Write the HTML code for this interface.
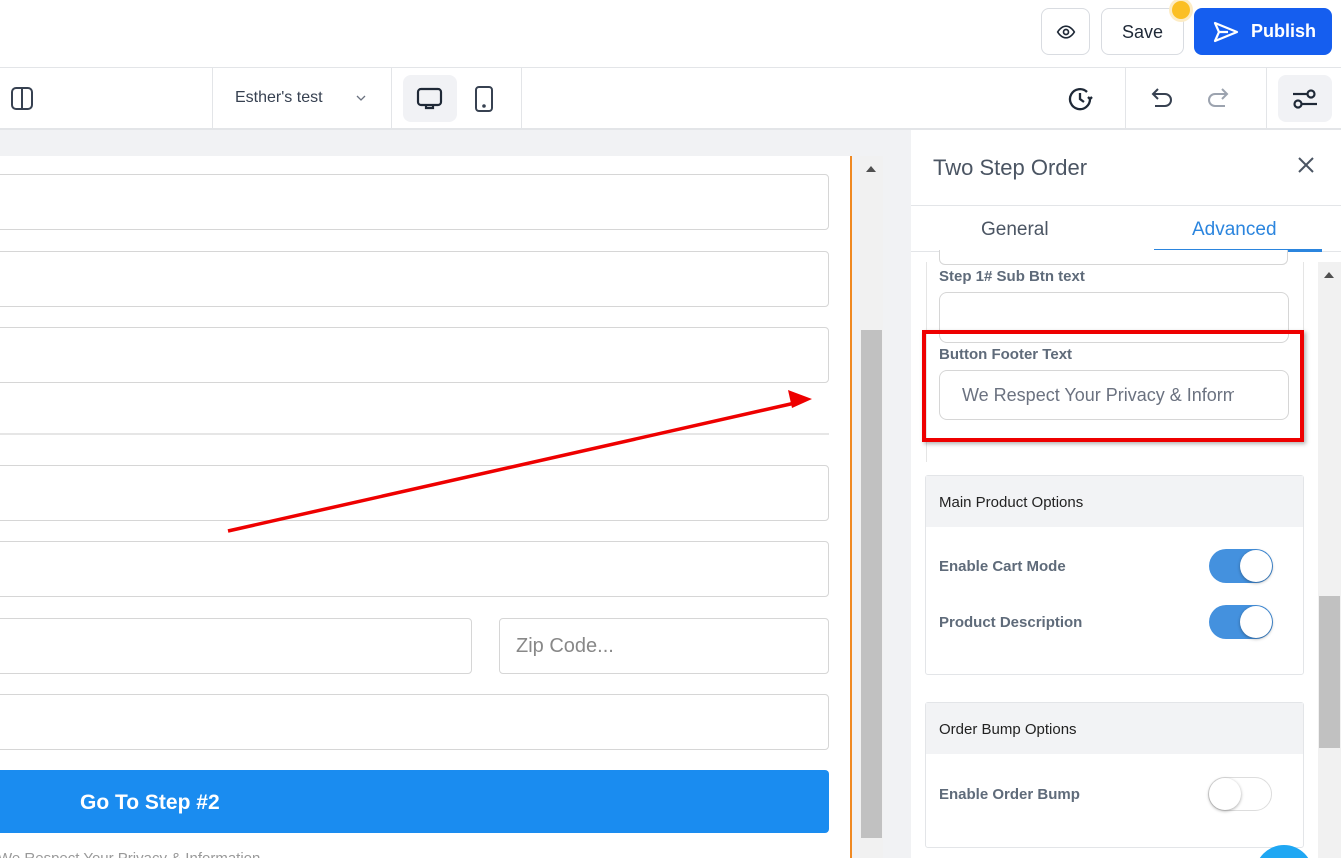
<!DOCTYPE html>
<html style="width:1341px;height:858px;overflow:hidden"><head><style>
*{box-sizing:border-box;margin:0;padding:0}
body{width:1341px;height:858px;overflow:hidden;background:#f1f2f4;font-family:"Liberation Sans",sans-serif;position:relative}
.a{position:absolute}
.inp{position:absolute;background:#fff;border:1px solid #d6d6d6;border-radius:4px}
.lbl{font-size:15px;color:#5f6b7a;font-weight:bold}
.tg{position:absolute;width:64px;height:34px;border-radius:17px}
.tg i{position:absolute;top:1px;width:32px;height:32px;border-radius:50%;background:#fff;box-shadow:0 1px 3px rgba(0,0,0,.35)}
</style></head><body>
<div class="a" style="left:0;top:0;width:1341px;height:68px;background:#fff;border-bottom:1px solid #e3e5e8"></div>
<div class="a" style="left:1041px;top:8px;width:49px;height:47px;border:1px solid #d9dce1;border-radius:8px;background:#fff"></div>
<svg class="a" style="left:1055px;top:22px" width="22" height="20" viewBox="0 0 24 24" fill="none" stroke="#1f2937" stroke-width="2"><path d="M2 12s4-7 10-7 10 7 10 7-4 7-10 7S2 12 2 12z"/><circle cx="12" cy="12" r="3"/></svg>
<div class="a" style="left:1101px;top:8px;width:83px;height:47px;border:1px solid #d9dce1;border-radius:8px;background:#fff;font-size:18px;color:#1f2937;text-align:center;line-height:47px">Save</div>
<div class="a" style="left:1172px;top:1px;width:18px;height:18px;border-radius:50%;background:#fbbf24;box-shadow:0 0 0 3px #fdecc4"></div>
<div class="a" style="left:1194px;top:8px;width:138px;height:47px;border-radius:8px;background:#155eef;color:#fff;font-size:18px;font-weight:bold;line-height:46px;padding-left:57px">Publish</div>
<svg class="a" style="left:1212px;top:20px" width="28" height="24" viewBox="0 0 28 24" fill="none" stroke="#fff" stroke-width="2.2" stroke-linejoin="round"><path d="M3 3l22 9-22 9 4-9z M7 12h9"/></svg>
<div class="a" style="left:0;top:68px;width:1341px;height:62px;background:#fff;border-bottom:2px solid #e3e5e8"></div>
<svg class="a" style="left:10px;top:86px" width="25" height="25" viewBox="0 0 25 25" fill="none" stroke="#374151" stroke-width="2"><rect x="2" y="2" width="20" height="21" rx="4"/><path d="M12 2v21"/></svg>
<div class="a" style="left:212px;top:68px;width:1px;height:61px;background:#e3e5e8"></div>
<div class="a" style="left:235px;top:89px;font-size:16px;color:#374151">Esther's test</div>
<svg class="a" style="left:355px;top:93px" width="12" height="10" viewBox="0 0 12 10" fill="none" stroke="#6b7280" stroke-width="1.3"><path d="M2 3l4 4 4-4"/></svg>
<div class="a" style="left:391px;top:68px;width:1px;height:61px;background:#e3e5e8"></div>
<div class="a" style="left:403px;top:75px;width:54px;height:47px;border-radius:8px;background:#f1f2f5"></div>
<svg class="a" style="left:416px;top:86px" width="28" height="26" viewBox="0 0 28 26" fill="none" stroke="#1f2937" stroke-width="2.2"><rect x="2" y="3" width="23" height="16" rx="3"/><path d="M10 19v3h7v-3"/></svg>
<svg class="a" style="left:473px;top:85px" width="22" height="28" viewBox="0 0 22 28" fill="none" stroke="#374151" stroke-width="2"><rect x="3" y="2" width="16" height="24" rx="3"/><circle cx="11" cy="21" r="0.8" fill="#374151"/></svg>
<div class="a" style="left:521px;top:68px;width:1px;height:61px;background:#e3e5e8"></div>
<svg class="a" style="left:1068px;top:86px" width="28" height="26" viewBox="0 0 28 26" fill="none" stroke="#1f2937" stroke-width="2.3"><path d="M22 13a10 10 0 1 1-3-7"/><path d="M12 7v6l4 3"/><path d="M22 13l2-2M22 13l-2-2"/></svg>
<div class="a" style="left:1125px;top:68px;width:1px;height:61px;background:#e3e5e8"></div>
<svg class="a" style="left:1150px;top:86px" width="26" height="24" viewBox="0 0 26 24" fill="none" stroke="#374151" stroke-width="2"><path d="M8 3L3 8l5 5M3 8h12a6 6 0 0 1 0 12H5"/></svg>
<svg class="a" style="left:1204px;top:86px" width="26" height="24" viewBox="0 0 26 24" fill="none" stroke="#9ca3af" stroke-width="2"><path d="M18 3l5 5-5 5M23 8H11a6 6 0 0 0 0 12h10"/></svg>
<div class="a" style="left:1266px;top:68px;width:1px;height:61px;background:#e3e5e8"></div>
<div class="a" style="left:1278px;top:75px;width:54px;height:47px;border-radius:8px;background:#f1f2f5"></div>
<svg class="a" style="left:1290px;top:86px" width="30" height="26" viewBox="0 0 30 26" fill="none" stroke="#1f2937" stroke-width="2.2"><circle cx="21" cy="8" r="3.5"/><path d="M3 8h14"/><circle cx="8" cy="18" r="3.5"/><path d="M12 18h15"/></svg>
<div class="a" style="left:0;top:156px;width:851px;height:702px;background:#fff"></div>
<div class="a" style="left:850px;top:156px;width:2px;height:702px;background:#f08a24"></div>
<div class="a" style="left:860px;top:156px;width:23px;height:702px;background:#f1f1f1"></div>
<div class="a" style="left:861px;top:330px;width:21px;height:508px;background:#c1c1c1"></div>
<div class="a" style="left:866px;top:166px;width:0;height:0;border-left:5px solid transparent;border-right:5px solid transparent;border-bottom:6px solid #505050"></div>
<div class="inp" style="left:-10px;top:174px;width:839px;height:56px"></div>
<div class="inp" style="left:-10px;top:251px;width:839px;height:56px"></div>
<div class="inp" style="left:-10px;top:327px;width:839px;height:56px"></div>
<div class="a" style="left:0;top:433px;width:829px;height:2px;background:#e6e6e6"></div>
<div class="inp" style="left:-10px;top:465px;width:839px;height:56px"></div>
<div class="inp" style="left:-10px;top:541px;width:839px;height:56px"></div>
<div class="inp" style="left:-10px;top:618px;width:482px;height:56px"></div>
<div class="inp" style="left:499px;top:618px;width:330px;height:56px;font-size:20px;color:#888;padding:16px 0 0 16px">Zip Code...</div>
<div class="inp" style="left:-10px;top:694px;width:839px;height:56px"></div>
<div class="a" style="left:-10px;top:770px;width:839px;height:63px;background:#1a8cf0;border-radius:4px;color:#fff;font-size:21px;font-weight:bold;padding:21px 0 0 90px">Go To Step #2</div>
<div class="a" style="left:-2px;top:850px;font-size:15px;color:#999">We Respect Your Privacy &amp; Information</div>
<svg class="a" style="left:0;top:0" width="900" height="600"><line x1="228" y1="531" x2="795" y2="403" stroke="#e00" stroke-width="3.5"/><path d="M812 399l-24-9 4 18z" fill="#e00"/></svg>
<div class="a" style="left:911px;top:130px;width:430px;height:728px;background:#fff"></div>
<div class="a" style="left:933px;top:155px;font-size:22px;color:#4b5563">Two Step Order</div>
<svg class="a" style="left:1296px;top:155px" width="20" height="20" viewBox="0 0 20 20" stroke="#4b5563" stroke-width="2"><path d="M3 3l14 14M17 3L3 17"/></svg>
<div class="a" style="left:911px;top:205px;width:430px;height:1px;background:#e3e5e8"></div>
<div class="a" style="left:981px;top:219px;font-size:19px;color:#4b5563">General</div>
<div class="a" style="left:1192px;top:219px;font-size:19px;color:#2b85de">Advanced</div>
<div class="a" style="left:911px;top:251px;width:430px;height:1px;background:#e3e5e8"></div>
<div class="a" style="left:1154px;top:249px;width:168px;height:3px;background:#2b85de"></div>
<div class="a" style="left:1318px;top:262px;width:23px;height:596px;background:#f1f1f1"></div>
<div class="a" style="left:1319px;top:596px;width:21px;height:152px;background:#c1c1c1"></div>
<div class="a" style="left:1324px;top:272px;width:0;height:0;border-left:5px solid transparent;border-right:5px solid transparent;border-bottom:6px solid #505050"></div>
<div class="a" style="left:926px;top:262px;width:1px;height:200px;background:#e5e5e5"></div>
<div class="a" style="left:1303px;top:262px;width:1px;height:70px;background:#e5e5e5"></div>
<div class="inp" style="left:939px;top:250px;width:349px;height:15px;border-top:none;border-radius:0 0 6px 6px"></div>
<div class="a lbl" style="left:939px;top:268px">Step 1# Sub Btn text</div>
<div class="inp" style="left:939px;top:292px;width:350px;height:51px;border-radius:8px"></div>
<div class="a lbl" style="left:939px;top:346px">Button Footer Text</div>
<div class="inp" style="left:939px;top:370px;width:350px;height:50px;border-radius:8px;font-size:18px;color:#6b7280;padding:14px 0 0 22px;white-space:nowrap;overflow:hidden"><span style="display:inline-block;width:272px;overflow:hidden">We Respect Your Privacy &amp; Information</span></div>
<div class="a" style="left:922px;top:330px;width:382px;height:112px;border:4px solid #e00;box-shadow:2px 2px 4px rgba(0,0,0,.3)"></div>
<div class="a" style="left:925px;top:475px;width:379px;height:200px;border:1px solid #e3e5e8;border-radius:3px;background:#fff"></div>
<div class="a" style="left:926px;top:476px;width:377px;height:51px;background:#f2f3f5;font-size:15px;color:#222;padding:18px 0 0 13px">Main Product Options</div>
<div class="a lbl" style="left:939px;top:558px">Enable Cart Mode</div>
<div class="tg" style="left:1209px;top:549px;background:#4491de"><i style="left:31px"></i></div>
<div class="a lbl" style="left:939px;top:614px">Product Description</div>
<div class="tg" style="left:1209px;top:605px;background:#4491de"><i style="left:31px"></i></div>
<div class="a" style="left:925px;top:702px;width:379px;height:146px;border:1px solid #e3e5e8;border-radius:3px;background:#fff"></div>
<div class="a" style="left:926px;top:703px;width:377px;height:51px;background:#f2f3f5;font-size:15px;color:#222;padding:18px 0 0 13px">Order Bump Options</div>
<div class="a lbl" style="left:939px;top:786px">Enable Order Bump</div>
<div class="tg" style="left:1208px;top:777px;background:#fff;border:1px solid #ddd"><i style="left:0;top:0"></i></div>
<div class="a" style="left:1255px;top:845px;width:58px;height:13px;overflow:hidden"><div style="width:58px;height:58px;border-radius:50%;background:#1fa7f3"></div></div>
</body></html>
